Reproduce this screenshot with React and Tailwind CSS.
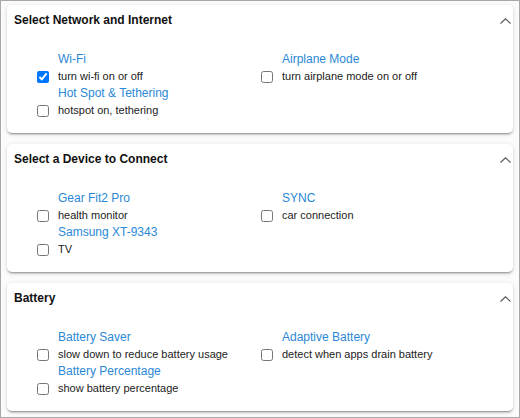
import React from "react";

const sections = [
  {
    title: "Select Network and Internet",
    items: [
      { label: "Wi-Fi", desc: "turn wi-fi on or off", checked: true },
      { label: "Airplane Mode", desc: "turn airplane mode on or off" },
      { label: "Hot Spot & Tethering", desc: "hotspot on, tethering" },
    ],
  },
  {
    title: "Select a Device to Connect",
    items: [
      { label: "Gear Fit2 Pro", desc: "health monitor" },
      { label: "SYNC", desc: "car connection" },
      { label: "Samsung XT-9343", desc: "TV" },
    ],
  },
  {
    title: "Battery",
    items: [
      { label: "Battery Saver", desc: "slow down to reduce battery usage" },
      { label: "Adaptive Battery", desc: "detect when apps drain battery" },
      { label: "Battery Percentage", desc: "show battery percentage" },
    ],
  },
];

function Chevron() {
  return (
    <svg width="11" height="6" viewBox="0 0 11 6" className="block">
      <path d="M0.5 5.5 L5.5 0.8 L10.5 5.5" fill="none" stroke="#555" strokeWidth="1.1" />
    </svg>
  );
}

function Item({ label, desc, checked }) {
  return (
    <div className="grid grid-cols-[21px_1fr]">
      <div className="h-[17px]" />
      <div className="text-[12px] leading-[17px] text-[#2a88d6]">{label}</div>
      <div className="flex h-[17px] items-center">
        <input
          type="checkbox"
          defaultChecked={checked}
          className="m-0 h-[12px] w-[12px]"
        />
      </div>
      <div className="text-[11px] leading-[17px] text-[#222]">{desc}</div>
    </div>
  );
}

function Section({ title, items }) {
  return (
    <div className="h-[128px] rounded-[5px] bg-white shadow-[0_3px_1px_-2px_rgba(0,0,0,0.2),0_2px_2px_0_rgba(0,0,0,0.14),0_1px_5px_0_rgba(0,0,0,0.12)]">
      <div className="flex h-[31px] items-center justify-between pl-[7px] pr-[2px]">
        <div className="text-[12px] font-bold leading-[17px] text-[#111]">{title}</div>
        <Chevron />
      </div>
      <div className="grid grid-cols-[224px_1fr] pl-[30px] pt-[15px]">
        {items.map((it, i) => (
          <Item key={i} {...it} />
        ))}
      </div>
    </div>
  );
}

export default function App() {
  return (
    <div
      className="h-[418px] w-[520px] border border-[#a8a8a8] bg-[#fbfbfb] px-[6px] pt-[4px]"
      style={{ fontFamily: '"Liberation Sans", Arial, sans-serif' }}
    >
      <div className="flex flex-col gap-[11px]">
        {sections.map((s, i) => (
          <Section key={i} {...s} />
        ))}
      </div>
    </div>
  );
}
